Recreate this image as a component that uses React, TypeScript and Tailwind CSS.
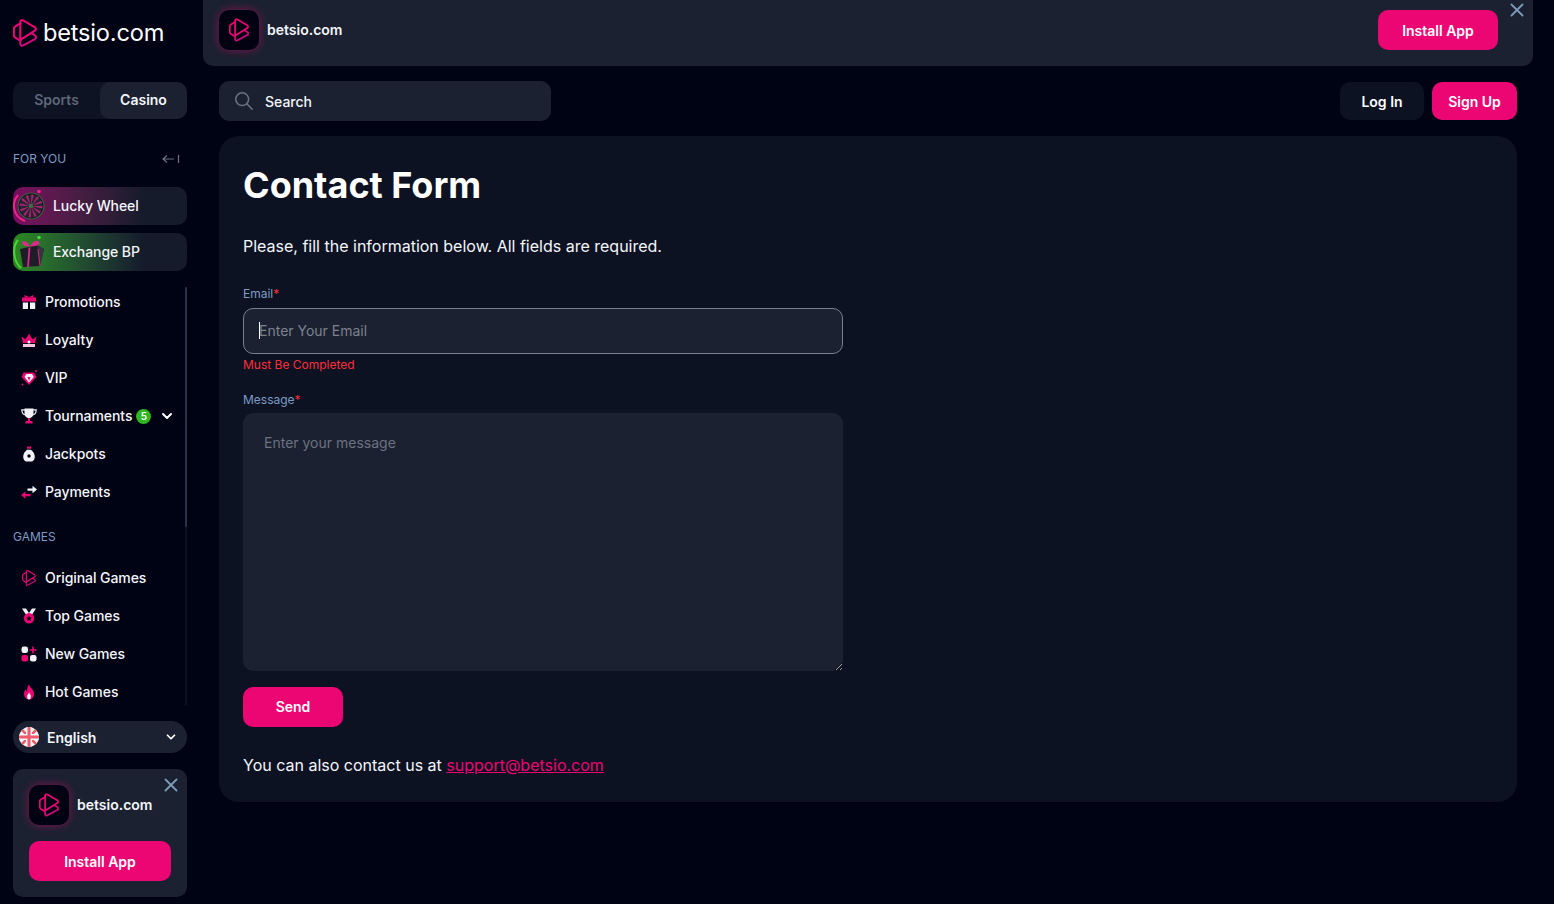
import { ChevronDown, X } from "lucide-react";

// brand mark: back tab plus two overlapping play triangles
function BrandMark({ className }: { className: string }) {
  return (
    <svg viewBox="0 0 24 28" fill="none" className={className}>
      <path d="M7.300 4.300 2.300 7.300C1.300 7.900.9 8.600.9 9.700v6.600c0 1.100.4 1.800 1.400 2.400l5 3" stroke="#ec0673" strokeWidth="2.100" strokeLinejoin="round" strokeLinecap="round" />
      <path d="M7.300 3c0-1.600 1.400-2.400 2.800-1.600l11.800 6.900c1.400.9 1.400 2.500 0 3.400L7.300 20.800Z" stroke="#ec0673" strokeWidth="2.100" strokeLinejoin="round" />
      <path d="M7.300 20.800v4c0 1.600 1.500 2.400 2.900 1.600l11.700-6.300c1.500-.9 1.500-2.800 0-3.700l-3.900-2.300" stroke="#d10a78" strokeWidth="2.100" strokeLinejoin="round" strokeLinecap="round" />
    </svg>
  );
}

function AppTile() {
  return (
    <div className="w-10 h-10 rounded-[10px] bg-[#020312] flex items-center justify-center shrink-0 shadow-[0_0_8px_rgba(236,6,115,0.5)]">
      <BrandMark className="w-[20px] h-6" />
    </div>
  );
}

function WheelThumb() {
  return (
    <svg viewBox="0 0 34 34" className="w-[34px] h-[34px] shrink-0">
      <path d="M5 6C-2 14 0 28 12 32" stroke="#f0218f" strokeWidth="2" fill="none" />
      <circle cx="26" cy="2.500" r="1.800" fill="#f0218f" />
      <circle cx="18" cy="17" r="13" fill="#11121c" stroke="#3f5c42" strokeWidth="1.200" />
      <circle cx="18" cy="17" r="7" fill="none" stroke="#2b2333" strokeWidth="9" />
      <circle cx="18" cy="17" r="7" fill="none" stroke="#a8246f" strokeWidth="9" strokeDasharray="1.500 2.165" />
      <circle cx="18" cy="17" r="2.400" fill="#3f6b44" />
    </svg>
  );
}

function GiftThumb() {
  return (
    <svg viewBox="0 0 34 34" className="w-[34px] h-[34px] shrink-0">
      <path d="M5 5C-1 12 0 26 8 33" stroke="#48d43a" strokeWidth="2" fill="none" />
      <circle cx="26" cy="2.500" r="1.800" fill="#48d43a" />
      <path d="M7 14 24 10l7 4-4 17-17 1Z" fill="#1e1d28" />
      <path d="M24 10l7 4-4 17-2-17Z" fill="#35333f" />
      <path d="M16.500 12.500 15 32" stroke="#d92c88" strokeWidth="1.800" />
      <path d="M25 14l2 17" stroke="#d92c88" strokeWidth="1" />
      <path d="M17 11.500C13 4 8 5 9.500 9c1 2 4.500 2.500 7.500 2.500Zm0 0c3-7 9-7 9.500-3.500.3 2.500-5.500 3.500-9.500 3.500Z" fill="#d92c88" />
    </svg>
  );
}

function SearchGlyph() {
  return (
    <svg viewBox="0 0 18 18" className="w-[18px] h-[18px] shrink-0" fill="none" stroke="#6b7280" strokeWidth="1.500" strokeLinecap="round">
      <circle cx="7.200" cy="7.200" r="6.400" />
      <path d="m11.800 11.800 5.400 5.400" />
    </svg>
  );
}

function NavIcon({ name }: { name: string }) {
  const pink = "#ec0673";
  const white = "#f1f3f8";
  return (
    <svg viewBox="0 0 16 16" className="w-4 h-4 shrink-0">
      {name === "gift" && (
        <>
          <path d="M1 3.500h14V7.500H1Z" fill={pink} />
          <path d="M3.500 3.500 3.500 1 8 3l4.500-2v2.500Z" fill={pink} />
          <path d="M1.800 8.500H7v6.500H1.800ZM9 8.500h5.200V15H9Z" fill={white} />
        </>
      )}
      {name === "crown" && (
        <>
          <path d="M.5 4.500 4.500 7.500 8 1.500l3.500 6 4-3L14 11H2Z" fill={pink} />
          <path d="M2 12h12v3H2Z" fill="#f7c6de" />
          <circle cx="8" cy="10" r="1.500" fill={white} />
        </>
      )}
      {name === "gem" && (
        <>
          <path d="M2.500 2.500h10.500l2.500 4.500L8 15 .5 7Z" fill={pink} />
          <path d="M5.500 4h5.500l1.800 3L8 12.500 3.500 7Z" fill={white} />
          <path d="M6.500 7h3L8 11Z" fill={pink} />
          <circle cx="15" cy="1" r="1" fill={pink} />
          <circle cx="1.500" cy="14.500" r="1" fill={pink} />
        </>
      )}
      {name === "trophy" && (
        <>
          <path d="M3.500.5h9v4C12.500 8.500 10.500 10 8 10S3.500 8.500 3.500 4.500Z" fill={white} />
          <path d="M4 1.800H.8c0 3.500 1.700 5 3.700 5M12 1.800h3.200c0 3.500-1.700 5-3.700 5" stroke={white} strokeWidth="1.200" fill="none" />
          <path d="M7 10h2v3.200H7ZM4.500 13h7v2.500h-7Z" fill={pink} />
        </>
      )}
      {name === "bag" && (
        <>
          <path d="M6 .5h4v2.200H6Z" fill={pink} />
          <path d="M6 3.800h4c2.200 1.700 3.800 4.200 3.800 7 0 3-1.800 4.700-3.300 4.700h-5c-1.500 0-3.300-1.700-3.300-4.700 0-2.800 1.600-5.300 3.800-7Z" fill={white} />
          <circle cx="8" cy="10" r="1.700" fill="#020312" />
        </>
      )}
      {name === "swap" && (
        <>
          <path d="M6.500 4.500h5V1.800L16 5.500l-4.500 3.700V6.800h-5Z" fill={white} />
          <path d="M9.500 10h-5V7.500L0 11l4.500 3.700v-2.400h5Z" fill={pink} />
        </>
      )}
      {name === "brand" && <BrandMark className="" />}
      {name === "medal" && (
        <>
          <path d="M1 .5h4L8 5l3-4.500h4L10.800 7H5.200Z" fill={white} />
          <circle cx="8" cy="10.300" r="5.200" fill={pink} />
          <path d="m8 7.500 .9 1.900 2 .2-1.500 1.400.4 2L8 12l-1.800 1 .4-2-1.500-1.400 2-.2Z" fill="#020312" />
        </>
      )}
      {name === "grid" && (
        <>
          <rect x=".5" y=".5" width="6.500" height="6.500" rx="2.200" fill={white} />
          <path d="M11.200.5h1.600v2.700h2.700v1.600h-2.700v2.700h-1.600V4.800H8.500V3.200h2.700Z" fill={pink} />
          <rect x=".5" y="9" width="6.500" height="6.500" rx="2" fill={pink} />
          <rect x="9" y="9" width="6.500" height="6.500" rx="2.200" fill={white} />
        </>
      )}
      {name === "flame" && (
        <>
          <path d="M8 .5c.5 3 5 4.800 5 9.500a5 5.500 0 0 1-5 5.500A5 5.500 0 0 1 3 10c0-2.200 1-3.500 1.800-4.400.2 1 .7 1.700 1.300 2C6 5 6.300 2.500 8 .5Z" fill={pink} />
          <path d="M8 8.500c.5 1.200 1.800 2 1.800 3.800A1.800 3 0 0 1 8 15.500a1.800 3 0 0 1-1.800-3.200C6.200 11 7.500 10 8 8.500Z" fill={white} />
        </>
      )}
    </svg>
  );
}

function UkFlag() {
  return (
    <svg viewBox="0 0 20 20" className="w-5 h-5 rounded-full shrink-0">
      <rect width="20" height="20" fill="#f3f4f6" />
      <path d="M0 0 20 20M20 0 0 20" stroke="#ef5a6c" strokeWidth="2.500" />
      <path d="M10 0v20M0 10h20" stroke="#f3f4f6" strokeWidth="6" />
      <path d="M10 0v20M0 10h20" stroke="#ef5a6c" strokeWidth="3" />
    </svg>
  );
}

function NavRow({ icon, label, badge, chevron }: { icon: string; label: string; badge?: string; chevron?: boolean }) {
  return (
    <div className="h-[38px] flex items-center pl-2 pr-3 text-sm font-medium tracking-[-0.07px] text-[#f4f6fb]">
      <NavIcon name={icon} />
      <span className="ml-2">{label}</span>
      {badge && (
        <span className="ml-1 w-[15px] h-[15px] rounded-full bg-[#2fb81f] text-white text-[10px] font-semibold flex items-center justify-center">{badge}</span>
      )}
      {chevron && <ChevronDown className="w-4 h-4 ml-auto text-white" strokeWidth={3} />}
    </div>
  );
}

export default function App() {
  return (
    <div className="h-[904px] overflow-hidden bg-[#000314] flex font-['Inter',sans-serif] text-white">
      {/* Sidebar */}
      <aside className="w-[203px] shrink-0 flex flex-col pl-[13px] pr-4">
        <div className="h-[66px] flex items-center gap-1.5">
          <BrandMark className="w-[24px] h-[28px]" />
          <span className="text-[23.6px] leading-none tracking-[-0.2px] text-white">betsio.com</span>
        </div>
        <div className="mt-4 h-[37px] rounded-[10px] bg-[#0d1322] grid grid-cols-2 text-sm font-semibold">
          <div className="flex items-center justify-center pb-px text-[#5f6779]">Sports</div>
          <div className="flex items-center justify-center pb-px rounded-[10px] bg-[#1b2130] text-[#f4f6fb]">Casino</div>
        </div>
        <div className="mt-[32px] flex items-center justify-between text-xs text-[#7d9cc4]">
          <span className="leading-[15px]">FOR YOU</span>
          <svg viewBox="0 0 18 10" className="w-[18px] h-2.5 mr-[7px]" fill="none" stroke="#6b7280" strokeWidth="1.200">
            <path d="M1 5h11M5 1.500 1 5l4 3.500M16.500 1v8" />
          </svg>
        </div>
        <div className="mt-[21px] h-[38px] rounded-[10px] bg-gradient-to-r from-[#7a0b5e] to-[#151b2b] to-[75%] flex items-center text-sm font-medium tracking-[-0.07px] text-[#f4f6fb] overflow-hidden">
          <WheelThumb />
          <span className="ml-1.5">Lucky Wheel</span>
        </div>
        <div className="mt-2 h-[38px] rounded-[10px] bg-gradient-to-r from-[#2c8a1e] to-[#151b2b] to-[75%] flex items-center text-sm font-medium tracking-[-0.07px] text-[#f4f6fb] overflow-hidden">
          <GiftThumb />
          <span className="ml-1.5">Exchange BP</span>
        </div>

        <div className="relative mt-3 h-[422px] -mr-4 pr-4">
          <div className="absolute right-4 top-1 w-0.5 h-[418px] bg-[#0b0f20]" />
          <div className="absolute right-4 top-1 w-0.5 h-60 rounded-full bg-[#2a3148]" />
          <NavRow icon="gift" label="Promotions" />
          <NavRow icon="crown" label="Loyalty" />
          <NavRow icon="gem" label="VIP" />
          <NavRow icon="trophy" label="Tournaments" badge="5" chevron />
          <NavRow icon="bag" label="Jackpots" />
          <NavRow icon="swap" label="Payments" />
          <div className="mt-[18px] mb-[15px] text-xs leading-[15px] text-[#7d9cc4]">GAMES</div>
          <NavRow icon="brand" label="Original Games" />
          <NavRow icon="medal" label="Top Games" />
          <NavRow icon="grid" label="New Games" />
          <NavRow icon="flame" label="Hot Games" />
        </div>

        <div className="mt-[16px] h-8 rounded-full bg-[#1b2130] flex items-center pl-1.5 pr-[9px] text-sm font-semibold text-[#f4f6fb]">
          <UkFlag />
          <span className="ml-2 mt-0.5">English</span>
          <ChevronDown className="w-3.5 h-3.5 ml-auto text-white" strokeWidth={3} />
        </div>

        <div className="relative mt-4 h-32 rounded-[10px] bg-[#1b2130] p-4">
          <X className="absolute right-[5px] top-[5px] w-[22px] h-[22px] text-[#7c9ab8]" strokeWidth={2} />
          <div className="flex items-center gap-2">
            <AppTile />
            <span className="text-sm font-semibold text-[#f4f6fb]">betsio.com</span>
          </div>
          <button className="mt-4 w-full h-10 pt-0.5 rounded-[10px] bg-[#ec0673] text-sm font-semibold text-white">Install App</button>
        </div>
      </aside>

      {/* Main column */}
      <main className="w-[1330px] shrink-0">
        <div className="relative h-[66px] rounded-b-[10px] bg-[#1b2130] flex items-start justify-between pt-2.5 pl-4 pr-[35px]">
          <div className="flex items-center gap-2">
            <AppTile />
            <span className="text-sm font-semibold text-[#f4f6fb]">betsio.com</span>
          </div>
          <button className="w-[120px] h-10 pt-0.5 rounded-[10px] bg-[#ec0673] text-sm font-semibold text-white">Install App</button>
          <X className="absolute right-[5px] -top-px w-[22px] h-[22px] text-[#7c9ab8]" strokeWidth={2} />
        </div>

        <div className="px-4">
          <div className="mt-[15px] h-10 flex items-center justify-between">
            <div className="w-[332px] h-10 rounded-[10px] bg-[#1b2130] flex items-center pl-4 text-sm font-medium text-[#f4f6fb]">
              <SearchGlyph />
              <span className="ml-3 mt-0.5">Search</span>
            </div>
            <div className="flex items-center gap-2">
              <button className="w-[84px] h-[38px] pt-0.5 rounded-[10px] bg-[#0c1222] text-sm font-semibold text-white">Log In</button>
              <button className="w-[85px] h-[38px] pt-0.5 rounded-[10px] bg-[#ec0673] text-sm font-semibold text-white">Sign Up</button>
            </div>
          </div>

          <section className="mt-[15px] h-[666px] rounded-[20px] bg-[#0c1222] px-6 pt-[26px]">
            <h1 className="text-[36px] leading-[46px] font-bold text-white">Contact Form</h1>
            <p className="mt-[26px] text-base leading-[24px] text-[#f4f6fb]">Please, fill the information below. All fields are required.</p>

            <div className="mt-[28px] w-[600px]">
              <label className="block text-xs leading-[15px] text-[#7d9cc4]">
                Email<span className="text-[#ff2d3a]">*</span>
              </label>
              <div className="relative mt-[7px]">
                <input
                  placeholder="Enter Your Email"
                  className="w-full h-[46px] rounded-[10px] border border-[#7a7f8c] bg-[#1b2130] px-[15px] pb-0.5 text-sm font-normal outline-none placeholder:text-[#7d828f]"
                />
                <div className="absolute left-4 top-3.5 w-px h-[17px] bg-white" />
              </div>
              <div className="mt-[3px] text-xs leading-[15px] text-[#ff2d3a]">Must Be Completed</div>

              <label className="block mt-[20px] text-xs leading-[15px] text-[#7d9cc4]">
                Message<span className="text-[#ff2d3a]">*</span>
              </label>
              <textarea
                placeholder="Enter your message"
                className="block mt-1.5 w-full h-[258px] rounded-[10px] bg-[#1b2130] px-[21px] py-[21px] text-sm leading-[18px] outline-none placeholder:text-[#6b7280]"
              />
              <button className="mt-4 w-[100px] h-10 rounded-[10px] bg-[#ec0673] text-sm font-semibold text-white">Send</button>
            </div>

            <p className="mt-[26px] text-base leading-[24px] text-[#f4f6fb]">
              You can also contact us at <a className="text-[#ec0673] underline" href="#">support@betsio.com</a>
            </p>
          </section>
        </div>
      </main>
    </div>
  );
}
